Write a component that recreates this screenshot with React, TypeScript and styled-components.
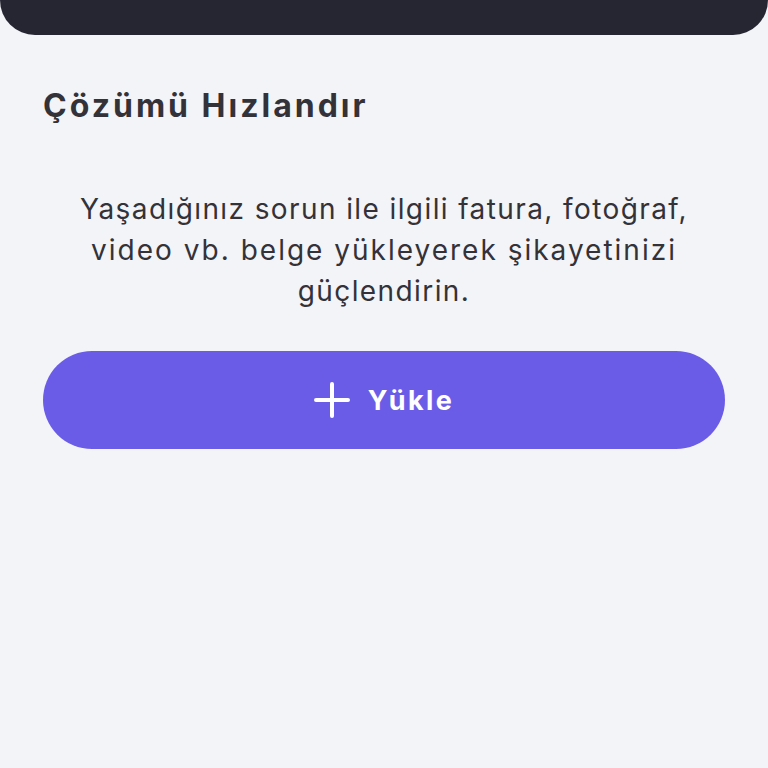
import React from "react";
import styled, { createGlobalStyle } from "styled-components";

const GlobalStyle = createGlobalStyle`
  html, body {
    margin: 0;
    padding: 0;
    background: #f3f4f8;
    font-family: Inter, "Noto Sans", sans-serif;
  }
`;

const Page = styled.div`
  width: 100%;
  min-height: 768px;
  background: #f3f4f8;
`;

const TopCard = styled.div`
  height: 35px;
  background: #262632;
  border-radius: 0 0 56px 56px;
`;

const Section = styled.section`
  padding: 0 43px;
  display: flex;
  flex-direction: column;
`;

const Title = styled.h2`
  margin: 51px 0 0 0;
  color: #333238;
  font-size: 32px;
  font-weight: 700;
  line-height: 40px;
  letter-spacing: 3px;
`;

const Description = styled.p`
  margin: 63px 0 0 0;
  color: #333238;
  text-align: center;
  font-size: 28px;
  font-weight: 400;
  line-height: 41px;
  letter-spacing: 1.4px;
  white-space: nowrap;
`;

const Line = styled.span<{ $spacing?: number }>`
  display: block;
  letter-spacing: ${(p) => (p.$spacing ? `${p.$spacing}px` : "inherit")};
`;

const UploadButton = styled.button`
  margin-top: 39px;
  height: 98px;
  width: 100%;
  border: none;
  border-radius: 49px;
  background: #6b5ce7;
  color: #ffffff;
  display: flex;
  align-items: center;
  justify-content: center;
  gap: 18px;
  font-family: inherit;
  font-size: 27px;
  font-weight: 700;
  letter-spacing: 2.4px;
  cursor: pointer;
`;

const PlusIcon = () => (
  <svg width="36" height="36" viewBox="0 0 36 36" fill="none">
    <path d="M18 2v32M2 18h32" stroke="#fff" strokeWidth="4" strokeLinecap="round" />
  </svg>
);

export default function App() {
  return (
    <Page>
      <GlobalStyle />
      <TopCard />
      <Section>
        <Title>Çözümü Hızlandır</Title>
        <Description>
          <Line>Yaşadığınız sorun ile ilgili fatura, fotoğraf,</Line>
          <Line $spacing={2}>video vb. belge yükleyerek şikayetinizi</Line>
          <Line>güçlendirin.</Line>
        </Description>
        <UploadButton>
          <PlusIcon />
          Yükle
        </UploadButton>
      </Section>
    </Page>
  );
}
